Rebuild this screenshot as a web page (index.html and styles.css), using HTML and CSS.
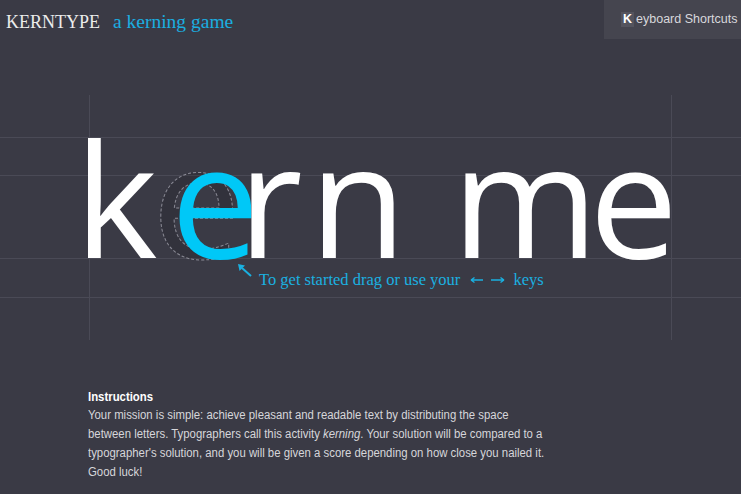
FILE: index.html
```html
<!DOCTYPE html>
<html>
<head>
<meta charset="utf-8">
<link rel="stylesheet" href="styles.css">
</head>
<body>
<header class="topbar">
  <div class="brand"><span class="brand-name">KERNTYPE</span><span class="tagline">a kerning game</span></div>
  <div class="shortcuts"><span class="key">K</span>eyboard Shortcuts</div>
</header>
<main class="stage">
  <div class="word">
    <svg class="ghost" width="100" height="130" viewBox="0 0 100 130" aria-hidden="true"><text x="0" y="126" class="ghost-text">e</text></svg>
    <span class="l l-k">k</span><span class="l l-e1 active">e</span><span class="l l-r">r</span><span class="l l-n">n</span><span class="l l-m">m</span><span class="l l-e2">e</span>
  </div>
  <div class="hint">
    <svg class="hint-arrow" width="14" height="13" viewBox="0 0 14 13"><path d="M13 12 L4 4" stroke="#1ab0e0" stroke-width="2" fill="none"/><path d="M0 0 L7 1.5 L1.5 7 Z" fill="#1ab0e0"/></svg>
    <span class="hint-text">To get started drag or use your</span>
    <svg class="hint-keys" width="36" height="10" viewBox="0 0 36 10"><path d="M1 5 H13 M1 5 L4.5 2.5 M1 5 L4.5 7.5" stroke="#1ab0e0" stroke-width="1.4" fill="none"/><path d="M21 5 H34 M34 5 L30.5 2.5 M34 5 L30.5 7.5" stroke="#1ab0e0" stroke-width="1.4" fill="none"/></svg>
    <span class="hint-text">keys</span>
  </div>
</main>
<section class="instructions">
  <h2 class="inst-title">Instructions</h2>
  <p class="inst-body">Your mission is simple: achieve pleasant and readable text by distributing the space<br>between letters. Typographers call this activity <em>kerning</em>. Your solution will be compared to a<br>typographer's solution, and you will be given a score depending on how close you nailed it.<br>Good luck!</p>
</section>
</body>
</html>
```
FILE: styles.css
```css
html, body {
  margin: 0;
  padding: 0;
}
body {
  width: 741px;
  height: 494px;
  overflow: hidden;
  background: #3a3a45;
  color: #dcdce0;
}
.topbar {
  display: flex;
  justify-content: space-between;
  align-items: flex-start;
  height: 40px;
}
.brand {
  padding: 10px 0 0 6px;
  font-family: "Liberation Serif", "Times New Roman", serif;
  line-height: 24px;
  display: flex;
  align-items: baseline;
}
.brand-name {
  font-size: 18px;
  color: #ececec;
}
.tagline {
  font-size: 19.5px;
  color: #1aaee0;
  margin-left: 13px;
}
.shortcuts {
  width: 137px;
  height: 39px;
  box-sizing: border-box;
  background: #45454f;
  padding: 12px 0 0 17px;
  font-family: "Liberation Sans", Arial, sans-serif;
  font-size: 12.5px;
  line-height: 15px;
  color: #d8d8dc;
  white-space: nowrap;
}
.key {
  display: inline-block;
  background: #54545e;
  color: #ffffff;
  font-weight: bold;
  padding: 0 2px;
  margin-right: 2px;
}
.stage {
  margin-top: 55px;
  padding-top: 37px;
  height: 245px;
  box-sizing: border-box;
  background:
    linear-gradient(#4a4a56, #4a4a56) 89px 0 / 1px 100% no-repeat,
    linear-gradient(#4a4a56, #4a4a56) 671px 0 / 1px 100% no-repeat,
    linear-gradient(#4a4a56, #4a4a56) 0 42px / 100% 1px no-repeat,
    linear-gradient(#4a4a56, #4a4a56) 0 80px / 100% 1px no-repeat,
    linear-gradient(#4a4a56, #4a4a56) 0 163px / 100% 1px no-repeat,
    linear-gradient(#4a4a56, #4a4a56) 0 202px / 100% 1px no-repeat;
}
.word {
  position: relative;
  display: flex;
  padding-left: 74.6px;
  height: 130px;
  font-family: "Open Sans", sans-serif;
  font-size: 158px;
  line-height: 130px;
  color: #ffffff;
  white-space: pre;
}
.l {
  position: relative;
  z-index: 1;
}
.active { color: #00c8f7; }
.l-e1 { margin-left: 13.2px; }
.l-r { margin-left: -21.6px; }
.l-n { margin-left: 7px; }
.l-m { margin-left: 45.5px; }
.l-e2 { margin-left: -9px; }
.ghost {
  position: absolute;
  left: 152.3px;
  top: 0;
  overflow: visible;
  z-index: 0;
}
.ghost-text {
  font-family: "Open Sans", sans-serif;
  font-size: 158px;
  fill: rgba(0, 0, 0, 0.12);
  stroke: #8a8a95;
  stroke-width: 1;
  stroke-dasharray: 3 2;
}
.hint {
  display: flex;
  align-items: baseline;
  margin-top: 8px;
  padding-left: 238px;
  font-family: "Liberation Serif", "Times New Roman", serif;
  font-size: 16.5px;
  line-height: 20px;
  color: #1ab0e0;
}
.hint-arrow {
  align-self: flex-start;
  margin-top: -6px;
  margin-right: 7px;
}
.hint-keys {
  margin: 0 7px 0 10px;
}
.instructions {
  margin-top: 48px;
  padding-left: 88px;
  font-family: "Liberation Sans", Arial, sans-serif;
  font-size: 12.5px;
  line-height: 19px;
  color: #d6d6da;
  transform: scaleX(0.91);
  transform-origin: 88px 0;
}
.inst-title {
  margin: 0;
  font-size: 12.5px;
  font-weight: bold;
  color: #ffffff;
}
.inst-body {
  margin: 0;
  margin-top: -1px;
}
.inst-body em { font-style: italic; }
```
